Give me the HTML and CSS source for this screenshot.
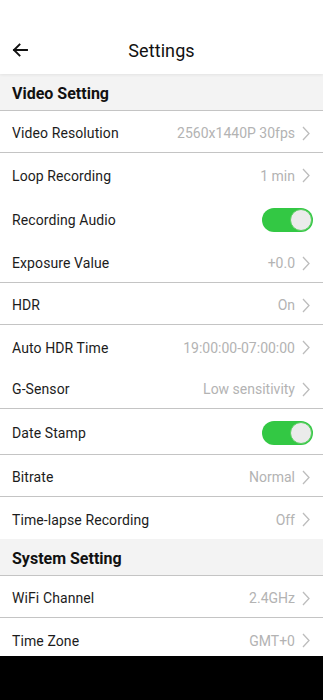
FILE: index.html
```html
<!DOCTYPE html>
<html>
<head>
<meta charset="utf-8">
<link rel="stylesheet" href="styles.css">
</head>
<body>
<div class="screen">
  <header class="topbar">
    <svg class="back" width="16" height="14" viewBox="0 0 16 14"><path d="M15 7H2M7.5 1.5L2 7l5.5 5.5" fill="none" stroke="#111" stroke-width="1.9" stroke-linecap="square"/></svg>
    <div class="title">Settings</div>
  </header>
  <main class="list">
    <div class="section">Video Setting</div>
    <div class="row line"><span class="label">Video Resolution</span><span class="value">2560x1440P 30fps</span><svg class="chev" width="8" height="15" viewBox="0 0 8 15"><path d="M1 1l6 6.5L1 14" fill="none" stroke="#bdbdbd" stroke-width="1.3"/></svg></div>
    <div class="row"><span class="label">Loop Recording</span><span class="value">1 min</span><svg class="chev" width="8" height="15" viewBox="0 0 8 15"><path d="M1 1l6 6.5L1 14" fill="none" stroke="#bdbdbd" stroke-width="1.3"/></svg></div>
    <div class="row tall"><span class="label">Recording Audio</span><span class="toggle"><span class="knob"></span></span></div>
    <div class="row line"><span class="label">Exposure Value</span><span class="value">+0.0</span><svg class="chev" width="8" height="15" viewBox="0 0 8 15"><path d="M1 1l6 6.5L1 14" fill="none" stroke="#bdbdbd" stroke-width="1.3"/></svg></div>
    <div class="row line"><span class="label">HDR</span><span class="value">On</span><svg class="chev" width="8" height="15" viewBox="0 0 8 15"><path d="M1 1l6 6.5L1 14" fill="none" stroke="#bdbdbd" stroke-width="1.3"/></svg></div>
    <div class="row"><span class="label">Auto HDR Time</span><span class="value">19:00:00-07:00:00</span><svg class="chev" width="8" height="15" viewBox="0 0 8 15"><path d="M1 1l6 6.5L1 14" fill="none" stroke="#bdbdbd" stroke-width="1.3"/></svg></div>
    <div class="row line"><span class="label">G-Sensor</span><span class="value">Low sensitivity</span><svg class="chev" width="8" height="15" viewBox="0 0 8 15"><path d="M1 1l6 6.5L1 14" fill="none" stroke="#bdbdbd" stroke-width="1.3"/></svg></div>
    <div class="row tall line"><span class="label">Date Stamp</span><span class="toggle"><span class="knob"></span></span></div>
    <div class="row line"><span class="label">Bitrate</span><span class="value">Normal</span><svg class="chev" width="8" height="15" viewBox="0 0 8 15"><path d="M1 1l6 6.5L1 14" fill="none" stroke="#bdbdbd" stroke-width="1.3"/></svg></div>
    <div class="row"><span class="label">Time-lapse Recording</span><span class="value">Off</span><svg class="chev" width="8" height="15" viewBox="0 0 8 15"><path d="M1 1l6 6.5L1 14" fill="none" stroke="#bdbdbd" stroke-width="1.3"/></svg></div>
    <div class="section">System Setting</div>
    <div class="row line"><span class="label">WiFi Channel</span><span class="value">2.4GHz</span><svg class="chev" width="8" height="15" viewBox="0 0 8 15"><path d="M1 1l6 6.5L1 14" fill="none" stroke="#bdbdbd" stroke-width="1.3"/></svg></div>
    <div class="row"><span class="label">Time Zone</span><span class="value">GMT+0</span><svg class="chev" width="8" height="15" viewBox="0 0 8 15"><path d="M1 1l6 6.5L1 14" fill="none" stroke="#bdbdbd" stroke-width="1.3"/></svg></div>
  </main>
  <footer class="navbar"></footer>
</div>
</body>
</html>
```

FILE: styles.css
```css
* { box-sizing: border-box; }
html, body { margin: 0; padding: 0; background: #fff; }
body { font-family: Roboto, "Noto Sans", "Liberation Sans", sans-serif; color: #1c1c1c; }
.screen { width: 323px; height: 700px; display: flex; flex-direction: column; overflow: hidden; }
.topbar {
  flex: 0 0 74px; padding-top: 26px; display: flex; align-items: center; justify-content: center;
  background: #fff; position: relative; z-index: 1; box-shadow: 0 1px 3px rgba(0,0,0,0.07);
}
.back { position: absolute; left: 12px; top: 43px; }
.title { font-size: 18px; color: #111; letter-spacing: 0.1px; }
.list { flex: 1; overflow: hidden; display: flex; flex-direction: column; }
.section {
  flex: 0 0 37px; background: #f3f3f3; border-bottom: 1px solid #c4c4c4;
  display: flex; align-items: center; padding: 2px 0 0 12px; font-size: 16px; font-weight: 700; color: #111;
}
.row { flex: 0 0 42px; display: flex; align-items: center; padding: 3px 13px 0 12px; background: #fff; }
.row.tall { flex-basis: 46px; padding-right: 10px; }
.row.line { border-bottom: 1px solid #c4c4c4; }
.label { font-size: 14px; flex: 1; color: #1c1c1c; letter-spacing: 0.1px; }
.value { font-size: 14px; color: #b3b3b3; margin-right: 7px; }
.chev { display: block; }
.toggle { width: 51px; height: 24px; border-radius: 12px; background: #33c844; position: relative; }
.knob {
  position: absolute; right: 1px; top: 1px; width: 22px; height: 22px; border-radius: 50%;
  background: #ebebeb; border: 1px solid #5ccd62;
}
.navbar { flex: 0 0 44px; background: #000; }
```
